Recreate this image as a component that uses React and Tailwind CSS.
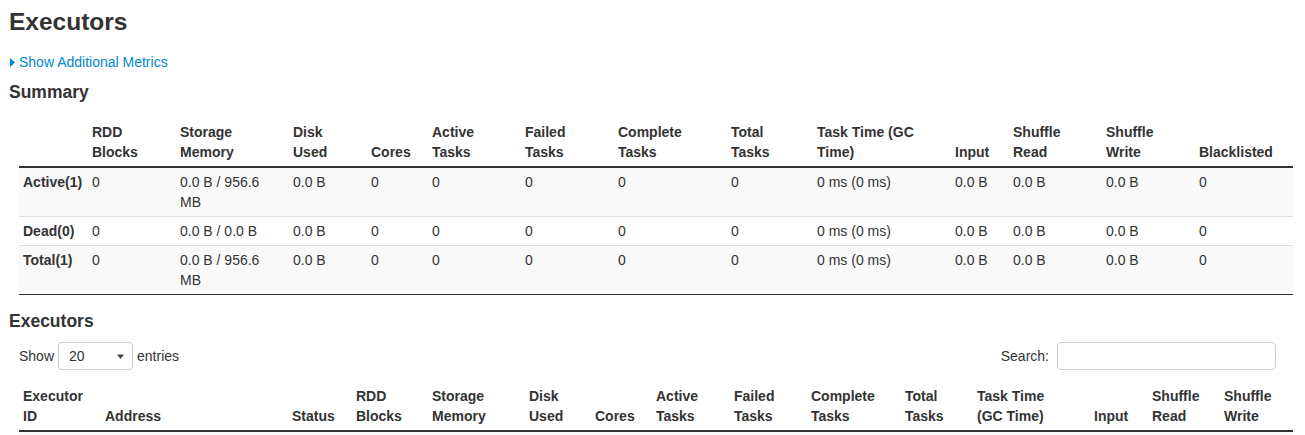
import React from "react";

const SUMMARY_COLS = [69, 88, 113, 78, 61, 93, 93, 113, 86, 138, 58, 93, 93, 98];
const SUMMARY_HEAD = [
  [""],
  ["RDD", "Blocks"],
  ["Storage", "Memory"],
  ["Disk", "Used"],
  ["Cores"],
  ["Active", "Tasks"],
  ["Failed", "Tasks"],
  ["Complete", "Tasks"],
  ["Total", "Tasks"],
  ["Task Time (GC", "Time)"],
  ["Input"],
  ["Shuffle", "Read"],
  ["Shuffle", "Write"],
  ["Blacklisted"],
];

const SUMMARY_ROWS = [
  { label: "Active(1)", storage: ["0.0 B / 956.6", "MB"] },
  { label: "Dead(0)", storage: ["0.0 B / 0.0 B"] },
  { label: "Total(1)", storage: ["0.0 B / 956.6", "MB"] },
];

const EXEC_COLS = [82, 187, 64, 76, 97, 66, 61, 78, 77, 94, 72, 117, 58, 72, 73];
const EXEC_HEAD = [
  ["Executor", "ID"],
  ["Address"],
  ["Status"],
  ["RDD", "Blocks"],
  ["Storage", "Memory"],
  ["Disk", "Used"],
  ["Cores"],
  ["Active", "Tasks"],
  ["Failed", "Tasks"],
  ["Complete", "Tasks"],
  ["Total", "Tasks"],
  ["Task Time", "(GC Time)"],
  ["Input"],
  ["Shuffle", "Read"],
  ["Shuffle", "Write"],
];

// col widths written out so tailwind picks them up
const COL_W = {
  58: "w-[58px]", 61: "w-[61px]", 64: "w-[64px]", 66: "w-[66px]", 69: "w-[69px]",
  72: "w-[72px]", 73: "w-[73px]", 76: "w-[76px]", 77: "w-[77px]", 78: "w-[78px]",
  82: "w-[82px]", 86: "w-[86px]", 88: "w-[88px]", 93: "w-[93px]", 94: "w-[94px]",
  97: "w-[97px]", 98: "w-[98px]", 113: "w-[113px]", 117: "w-[117px]", 138: "w-[138px]",
  187: "w-[187px]",
};

function HeadCell({ lines }) {
  return (
    <th className="px-[4px] py-[4px] text-left align-bottom font-bold border-b-2 border-[#333]">
      {lines.map((l, i) => (
        <React.Fragment key={i}>
          {i > 0 && <br />}
          {l}
        </React.Fragment>
      ))}
    </th>
  );
}

function Cell({ children, bold }) {
  return (
    <td className={`px-[4px] py-[4px] align-top border-t border-[#ddd] ${bold ? "font-bold" : ""}`}>
      {children}
    </td>
  );
}

export default function App() {
  return (
    <div className="pl-[9px] text-[14px] leading-[20px] text-[#333] font-['Liberation_Sans',Arial,sans-serif] bg-white">
      <h3 className="mt-[2px] mb-[10px] text-[24.5px] leading-[40px] font-bold">Executors</h3>

      <div className="flex items-center">
        <svg width="6" height="9" viewBox="0 0 6 9" className="ml-[1px] mr-[3px]">
          <path d="M0 0L5 4.5L0 9Z" fill="#0088cc" />
        </svg>
        <a href="#" className="text-[#0088cc]">Show Additional Metrics</a>
      </div>

      <h4 className="mt-[10px] mb-[16px] text-[17.5px] leading-[20px] font-bold">Summary</h4>

      <table className="ml-[10px] w-[1274px] table-fixed border-collapse">
        <colgroup>
          {SUMMARY_COLS.map((w, i) => (
            <col key={i} className={COL_W[w]} />
          ))}
        </colgroup>
        <thead>
          <tr>
            {SUMMARY_HEAD.map((h, i) => (
              <HeadCell key={i} lines={h} />
            ))}
          </tr>
        </thead>
        <tbody>
          {SUMMARY_ROWS.map((r, idx) => (
            <tr key={r.label} className={`${idx % 2 === 0 ? "bg-[#f9f9f9]" : "bg-white"} ${idx === 2 ? "border-b border-[#333]" : ""}`}>
              <Cell bold>{r.label}</Cell>
              <Cell>0</Cell>
              <Cell>
                {r.storage[0]}
                {r.storage[1] && (
                  <>
                    <br />
                    {r.storage[1]}
                  </>
                )}
              </Cell>
              <Cell>0.0 B</Cell>
              <Cell>0</Cell>
              <Cell>0</Cell>
              <Cell>0</Cell>
              <Cell>0</Cell>
              <Cell>0</Cell>
              <Cell>0 ms (0 ms)</Cell>
              <Cell>0.0 B</Cell>
              <Cell>0.0 B</Cell>
              <Cell>0.0 B</Cell>
              <Cell>0</Cell>
            </tr>
          ))}
        </tbody>
      </table>

      <h4 className="mt-[16px] text-[17.5px] leading-[20px] font-bold">Executors</h4>

      <div className="mt-[11px] ml-[10px] w-[1257px] flex items-center justify-between">
        <label className="flex items-center">
          Show
          <div className="mx-[4px] w-[75px] h-[28px] border border-[#ccc] rounded-[4px] flex items-center justify-between pl-[10px] pr-[8px] bg-white">
            <span>20</span>
            <svg width="7" height="5" viewBox="0 0 7 5">
              <path d="M0 0.5L7 0.5L3.5 5Z" fill="#444" />
            </svg>
          </div>
          entries
        </label>
        <label className="flex items-center">
          Search:
          <input className="ml-[8px] w-[219px] h-[28px] border border-[#ccc] rounded-[4px] bg-white outline-none" />
        </label>
      </div>

      <table className="mt-[12px] ml-[10px] w-[1274px] table-fixed border-collapse">
        <colgroup>
          {EXEC_COLS.map((w, i) => (
            <col key={i} className={COL_W[w]} />
          ))}
        </colgroup>
        <thead>
          <tr>
            {EXEC_HEAD.map((h, i) => (
              <HeadCell key={i} lines={h} />
            ))}
          </tr>
        </thead>
        <tbody>
          {/* first striped row, only its top edge is in view */}
          <tr className="bg-[#f9f9f9] h-[28px]">
            {EXEC_COLS.map((w, i) => (
              <td key={i} className="border-t border-[#ddd]" />
            ))}
          </tr>
        </tbody>
      </table>
    </div>
  );
}
